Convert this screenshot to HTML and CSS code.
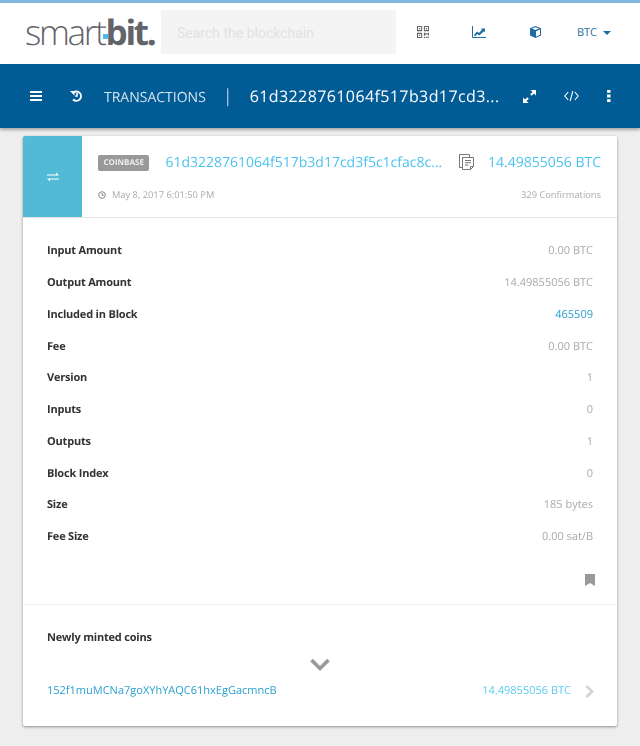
FILE: index.html
```html
<!DOCTYPE html>
<html>
<head>
  <title>smartbit - Transaction</title>
  <link rel="stylesheet" href="styles.css">
</head>
<body>
  <div class="top-strip"></div>
  <header class="site-header">
    <div class="logo"><span class="logo-thin">smart</span><span class="logo-dot"></span><span class="logo-bold">bit.</span></div>
    <input class="search" type="text" placeholder="Search the blockchain">
    <div class="header-links">
      <a class="header-link">
        <svg width="12" height="12" viewBox="0 0 14 14"><path fill="#666" fill-rule="evenodd" d="M0 0h6v6H0zM1.200 1.200v3.600h3.600V1.200zM8 0h6v6H8zM9.200 1.200v3.600h3.600V1.200zM0 8h6v6H0zM1.200 9.200v3.600h3.600V9.200z"/><path fill="#666" d="M2.300 2.300h1.400v1.400H2.300zM10.300 2.300h1.400v1.400h-1.400zM2.300 10.300h1.400v1.400H2.300zM8 8h1.500v3.500H8zM9.500 8.500H12V10H9.500zM12.500 8H14v3h-1.500zM8 12.500h1.500V14H8zM10.500 12.500H12V14h-1.500zM12.500 12.500H14V14h-1.500z"/></svg>
      </a>
      <a class="header-link">
        <svg width="14" height="12" viewBox="0 0 14 12"><path fill="none" stroke="#1e6ea3" stroke-width="1" d="M.5 0v11.500H14"/><path fill="#1e6ea3" d="M2 9l3-3.500 2 1.500 3-3.500-1.200-1H13v3.800l-1-1L7.300 9.500l-2-1.500L3 10.500z"/></svg>
      </a>
      <a class="header-link">
        <svg width="11" height="12" viewBox="0 0 11 12"><path fill="#1e6ea3" d="M5.500 0L11 2.200v7.200L5.500 12 0 9.400V2.200z"/><path fill="#fff" d="M2 2.500l3.500-1.300L9 2.500 5.500 4zM6 5.200l4-1.700v5.300l-4 2z"/></svg>
      </a>
      <a class="header-link btc">BTC <span class="caret"></span></a>
    </div>
  </header>

  <nav class="tool-bar">
    <svg class="menu-icon" width="12" height="10" viewBox="0 0 12 10"><path fill="#fff" d="M0 0h12v2H0zM0 4h12v2H0zM0 8h12v2H0z"/></svg>
    <svg class="history-icon" width="13" height="12" viewBox="0 0 13 12"><path fill="none" stroke="#fff" stroke-width="1.800" d="M2.700 3.200A4.700 4.700 0 1 1 3 9.500"/><path fill="#fff" d="M0 1h4.500v4.500zM6.200 3h1.600v3.800H5V5.500h1.200z"/></svg>
    <span class="section-name">TRANSACTIONS</span>
    <span class="divider">|</span>
    <span class="tx-title">61d3228761064f517b3d17cd3...</span>
    <div class="tool-icons">
      <svg width="13" height="13" viewBox="0 0 13 13"><path fill="#fff" d="M7.500 0H13v5.500l-2-2-2.300 2.300-1.500-1.500L9.500 2zM0 13V7.500l2 2 2.300-2.300 1.500 1.500L3.500 11l2 2z"/></svg>
      <svg width="15" height="10" viewBox="0 0 15 10"><path fill="none" stroke="#fff" stroke-width="1.100" d="M4.200 1L.8 5l3.400 4M10.800 1l3.400 4-3.400 4M8.800 0L6.200 10"/></svg>
      <svg width="4" height="12" viewBox="0 0 4 12"><path fill="#fff" d="M0 0h3.500v2.800H0zM0 4.600h3.500v2.800H0zM0 9.200h3.500V12H0z"/></svg>
    </div>
  </nav>

  <main class="card">
    <section class="tx-head">
      <div class="tx-type">
        <svg width="12" height="10" viewBox="0 0 12 10"><path fill="#fff" d="M0 2h9V0l3 3H0zM12 7H3v2L0 6h12z" transform="translate(0 .5)"/></svg>
      </div>
      <div class="tx-summary">
        <div class="tx-line">
          <span class="badge">COINBASE</span>
          <a class="tx-hash">61d3228761064f517b3d17cd3f5c1cfac8c...</a>
          <svg class="copy-icon" width="15" height="16" viewBox="0 0 15 16"><path fill="none" stroke="#777" d="M3 13.500H.5V.5h10V3M3.500 3.500h11v9l-3 3h-8zM14.500 12.500h-3v3M6 6.500h6M6 8.700h6M6 11h3.500"/></svg>
          <span class="tx-amount">14.49855056 BTC</span>
        </div>
        <div class="tx-meta">
          <span class="tx-time">
            <svg width="8" height="8" viewBox="0 0 8 8"><circle cx="4" cy="4" r="3.300" fill="none" stroke="#888" stroke-width="1"/><path fill="none" stroke="#888" d="M4 2v2.300h1.800"/></svg>
            May 8, 2017 6:01:50 PM
          </span>
          <span>329 Confirmations</span>
        </div>
      </div>
    </section>

    <section class="details">
      <div class="detail-row"><span class="detail-label">Input Amount</span><span>0.00 BTC</span></div>
      <div class="detail-row"><span class="detail-label">Output Amount</span><span>14.49855056 BTC</span></div>
      <div class="detail-row"><span class="detail-label">Included in Block</span><a class="block-link">465509</a></div>
      <div class="detail-row"><span class="detail-label">Fee</span><span>0.00 BTC</span></div>
      <div class="detail-row"><span class="detail-label">Version</span><span>1</span></div>
      <div class="detail-row"><span class="detail-label">Inputs</span><span>0</span></div>
      <div class="detail-row"><span class="detail-label">Outputs</span><span>1</span></div>
      <div class="detail-row"><span class="detail-label">Block Index</span><span>0</span></div>
      <div class="detail-row"><span class="detail-label">Size</span><span>185 bytes</span></div>
      <div class="detail-row"><span class="detail-label">Fee Size</span><span>0.00 sat/B</span></div>
      <div class="bookmark-row">
        <svg width="10" height="12" viewBox="0 0 10 12"><path fill="#999" d="M0 0h10v12L5 9 0 12z"/></svg>
      </div>
    </section>

    <section class="io">
      <div class="io-title">Newly minted coins</div>
      <div class="io-arrow">
        <svg width="20" height="13" viewBox="0 0 20 13"><path fill="none" stroke="#999" stroke-width="3.600" d="M1.500 2l8.500 8.500L18.500 2"/></svg>
      </div>
      <div class="io-row">
        <a class="io-address">152f1muMCNa7goXYhYAQC61hxEgGacmncB</a>
        <span class="io-amount">14.49855056 BTC</span>
        <svg class="io-next" width="9" height="13" viewBox="0 0 9 13"><path fill="none" stroke="#d4d4d4" stroke-width="2.600" d="M1.500 1l5.500 5.500L1.500 12"/></svg>
      </div>
    </section>
  </main>
</body>
</html>
```

FILE: styles.css
```css
* {
  box-sizing: border-box;
}

body {
  margin: 0;
  height: 746px;
  overflow: hidden;
  background-color: #eeeeee;
  font-family: "Open Sans", "Noto Sans", sans-serif;
  font-size: 11px;
  color: #aaaaaa;
  text-rendering: geometricPrecision;
}

a {
  text-decoration: none;
}

svg {
  display: block;
  flex-shrink: 0;
}

.top-strip {
  height: 3px;
  background-color: #7fb7de;
}

.site-header {
  display: flex;
  align-items: center;
  height: 61px;
  padding: 0 0 3px 25px;
  background-color: #fff;
}

.logo {
  display: flex;
  align-items: center;
  width: 136px;
  height: 44px;
  font-size: 35px;
  letter-spacing: -2.300px;
  color: #62646a;
}

.logo-thin {
  font-weight: 300;
}

.logo-dot {
  width: 5px;
  height: 5px;
  margin: 8px -2px 0 -2px;
  background-color: #45bdf0;
  position: relative;
}

.logo-bold {
  font-weight: 700;
}

.search {
  width: 235px;
  height: 44px;
  padding: 2px 16px 0;
  border: none;
  border-radius: 2px;
  background-color: #f4f4f4;
  font-family: Roboto, sans-serif;
  font-size: 14px;
}

.search::placeholder {
  color: #e2e2e2;
}

.header-links {
  display: flex;
  align-items: center;
  margin-left: -1px;
}

.header-link {
  width: 56px;
  display: flex;
  justify-content: center;
  color: #1e6ea3;
}

.btc {
  align-items: center;
  gap: 6px;
  padding-top: 1px;
  font-size: 11px;
  margin-left: 3px;
}

.caret {
  width: 0;
  height: 0;
  border-left: 4px solid transparent;
  border-right: 4px solid transparent;
  border-top: 4px solid #1e6ea3;
}

.tool-bar {
  display: flex;
  align-items: center;
  height: 64px;
  padding-left: 30px;
  background-color: #015c96;
  box-shadow: 0 2px 3px rgba(0, 0, 0, 0.3);
  color: #fff;
  position: relative;
  will-change: transform;
}

.history-icon {
  margin-left: 28px;
}

.section-name {
  margin: 2px 0 0 21px;
  font-size: 14px;
  color: #d6e4ee;
}

.divider {
  margin-left: 17px;
  font-size: 18px;
  color: #a9c6da;
}

.tx-title {
  margin-left: 17px;
  font-size: 16px;
  letter-spacing: 0.4px;
}

.tool-icons {
  display: flex;
  align-items: center;
  margin-left: 23px;
  gap: 28px;
}

.card {
  width: 594px;
  height: 590px;
  margin: 8px 0 0 23px;
  border-radius: 2px;
  overflow: hidden;
  background-color: #fff;
  box-shadow: 0 1px 3px rgba(0, 0, 0, 0.4);
  will-change: transform;
}

.tx-head {
  display: flex;
  height: 82px;
  border-bottom: 1px solid #e5e5e5;
}

.tx-type {
  display: flex;
  align-items: center;
  justify-content: center;
  width: 59px;
  background-color: #52bad5;
}

.tx-summary {
  flex: 1;
  padding: 15px 16px 0;
}

.tx-line {
  display: flex;
  align-items: center;
  height: 22px;
}

.badge {
  margin-top: 1px;
  padding: 0 5.500px;
  height: 16px;
  line-height: 16px;
  border-radius: 2px;
  background-color: #999;
  color: #eee;
  font-size: 8px;
  font-weight: 700;
}

.tx-hash {
  margin-left: 16px;
  font-size: 14px;
  color: #4cc3ef;
}

.copy-icon {
  margin-left: 17px;
}

.tx-amount {
  margin-left: auto;
  font-size: 14px;
  color: #4cc3ef;
}

.tx-meta {
  display: flex;
  justify-content: space-between;
  margin-top: 15px;
  font-size: 9.300px;
}

.tx-time {
  display: flex;
  align-items: center;
  gap: 6px;
}

.details {
  height: 387px;
  padding: 17px 24px 0;
  border-bottom: 1px solid #eeeeee;
}

.detail-row {
  display: flex;
  justify-content: space-between;
  align-items: center;
  height: 31.750px;
}

.detail-label {
  font-size: 11px;
  font-weight: 700;
  letter-spacing: -0.2px;
  color: #333;
}

.block-link {
  color: #2a9fd0;
}

.bookmark-row {
  display: flex;
  justify-content: flex-end;
  margin-top: 21px;
  margin-right: -2px;
}

.io {
  padding: 25px 24px 0;
}

.io-title {
  font-weight: 700;
  letter-spacing: -0.2px;
  color: #333;
}

.io-arrow {
  display: flex;
  justify-content: center;
  margin-top: 13px;
}

.io-row {
  display: flex;
  align-items: center;
  margin-top: 12px;
}

.io-address {
  color: #2a9fd0;
}

.io-amount {
  margin-left: auto;
  margin-right: 14px;
  color: #5ccbf3;
}

.io-next {
  margin: 2px -1px 0 0;
}
```
